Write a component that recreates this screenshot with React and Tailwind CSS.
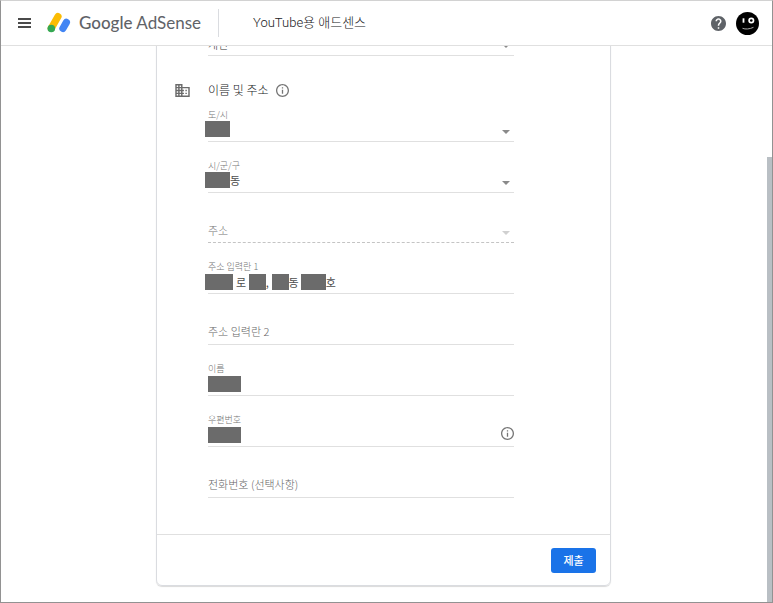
import React from "react";

const Line = "border-b border-[#e0e0e0]";

function Mask({ className }) {
  return <span aria-hidden="true" className={`absolute h-4 bg-[#6b6b6b] ${className}`} />;
}

function InfoIcon() {
  return (
    <svg viewBox="2 2 20 20" className="block size-[13px] shrink-0" fill="#757575" aria-hidden="true">
      <path d="M11 7h2v2h-2zm0 4h2v6h-2zm1-9C6.480 2 2 6.480 2 12s4.480 10 10 10 10-4.480 10-10S17.520 2 12 2zm0 18c-4.410 0-8-3.590-8-8s3.590-8 8-8 8 3.590 8 8-3.590 8-8 8z" />
    </svg>
  );
}

function Arrow({ className }) {
  return (
    <svg viewBox="0 0 8 4" className={`pointer-events-none absolute right-1 bottom-[7px] h-1 w-2 ${className}`} aria-hidden="true">
      <path d="M0 0h8L4 4z" fill="currentColor" />
    </svg>
  );
}

function SelectField({ id, label, value, pad = "", children }) {
  return (
    <div className={`flex h-[51px] flex-col justify-end ${Line}`}>
      <label htmlFor={id} className="text-[9px] leading-3 text-[#757575]">{label}</label>
      <div className="relative">
        <select id={id} defaultValue={value} className={`block h-5 w-full appearance-none bg-transparent pb-1 text-[11px] font-normal text-[#4d4d4d] outline-none ${pad}`}>
          <option>{value}</option>
        </select>
        {children}
        <Arrow className="text-[#8a8a8a]" />
      </div>
    </div>
  );
}

function InputField({ id, label, value = "", pad = "", children }) {
  return (
    <div className={`flex h-[51px] flex-col justify-end ${Line}`}>
      <label htmlFor={id} className="text-[9px] leading-3 text-[#757575]">{label}</label>
      <div className="relative">
        <input id={id} defaultValue={value} className={`block h-5 w-full bg-transparent pb-0.5 text-[11px] font-normal text-[#4d4d4d] outline-none ${pad}`} />
        {children}
      </div>
    </div>
  );
}

function EmptyField({ id, label }) {
  return (
    <div className={`flex h-[51px] items-end ${Line}`}>
      <input id={id} aria-label={label} placeholder={label} className="block h-6 w-full bg-transparent pb-0.5 text-[11px] outline-none placeholder:text-[#666666]" />
    </div>
  );
}

function Header() {
  return (
    <header className="flex h-[45px] shrink-0 items-center border-b border-[#e0e0e0] pr-[13px] pl-[17px]">
      <button type="button" aria-label="메뉴" className="flex h-[10px] w-[13px] flex-col justify-between">
        <span className="h-[2px] w-full bg-[#4a4a4a]" />
        <span className="h-[2px] w-full bg-[#4a4a4a]" />
        <span className="h-[2px] w-full bg-[#4a4a4a]" />
      </button>
      <a href="#" className="ml-4 flex items-center font-normal text-[#5f6368]">
        <svg viewBox="0 0 24 22" className="h-[22px] w-6" aria-hidden="true">
          <path d="M4.300 16.200 11 4.500" stroke="#fbbc04" strokeWidth="7.200" strokeLinecap="round" />
          <circle cx="4.300" cy="16.500" r="3.800" fill="#34a853" />
          <path d="M15.900 16.500 19.400 10.400" stroke="#4285f4" strokeWidth="7.200" strokeLinecap="round" />
        </svg>
        <span className="ml-2 font-[Lato] text-[17px] leading-6">
          <span className="font-medium">Google</span> AdSense
        </span>
      </a>
      <span className="ml-[17px] h-7 w-px bg-[#dadce0]" />
      <h1 className="ml-[34px] font-[Roboto,'Noto_Sans_CJK_KR',sans-serif] text-[13px] leading-5 font-light text-[#202124]">YouTube용 애드센스</h1>
      <button type="button" aria-label="도움말" className="ml-auto">
        <svg viewBox="2 2 20 20" className="size-[15px]" fill="#5f6368" aria-hidden="true">
          <path d="M12 2C6.480 2 2 6.480 2 12s4.480 10 10 10 10-4.480 10-10S17.520 2 12 2zm1 17h-2v-2h2v2zm2.070-7.750-.9.920C13.450 12.900 13 13.500 13 15h-2v-.5c0-1.100.45-2.100 1.170-2.830l1.240-1.260c.37-.36.59-.86.59-1.410 0-1.100-.9-2-2-2s-2 .9-2 2H8c0-2.210 1.790-4 4-4s4 1.790 4 4c0 .88-.36 1.680-.93 2.250z" />
        </svg>
      </button>
      <button type="button" aria-label="계정" className="ml-[10px]">
        <svg viewBox="0 0 23 23" className="size-[23px]" aria-hidden="true">
          <circle cx="11.500" cy="11.500" r="11.500" />
          <path d="M7.500 6.300v4.400" stroke="#fff" strokeWidth="1.800" />
          <circle cx="15.300" cy="8.500" r="2.200" fill="none" stroke="#fff" strokeWidth="1.700" />
          <path d="M6.500 16.300c3 1.200 7 .9 11-1" fill="none" stroke="#aaa" strokeWidth="1" />
        </svg>
      </button>
    </header>
  );
}

export default function App() {
  return (
    <div className="relative flex h-screen flex-col overflow-hidden border border-t-[#d2d2d2] border-r-[#929292] border-b-[#929292] border-l-[#929292] bg-white font-['Noto_Sans_CJK_KR',sans-serif] font-light">
      <Header />
      <main className="flex min-h-0 flex-1 flex-col items-center justify-end overflow-hidden pr-[6px] pb-4">
        <form className="w-full max-w-[455px] shrink-0 rounded-md border border-[#dadce0] shadow-[0_1px_1px_rgba(0,0,0,0.15)]">
          <div className="pr-24 pb-9 pl-[51px]">
            <div className={`relative ${Line}`}>
              <select aria-label="계정 유형" className="block h-5 w-full appearance-none bg-transparent pb-0.5 text-[11px] text-[#333333] outline-none">
                <option>개인</option>
              </select>
              <Arrow className="text-[#8a8a8a]" />
            </div>
            <div className="mt-6 -mb-[9px] -ml-[33px] flex h-5 items-center">
              <svg viewBox="2 3 20 18" className="h-[13px] w-[15px] shrink-0" fill="#6b6b6b" aria-hidden="true">
                <path d="M12 7V3H2v18h20V7H12zM6 19H4v-2h2v2zm0-4H4v-2h2v2zm0-4H4V9h2v2zm0-4H4V5h2v2zm4 12H8v-2h2v2zm0-4H8v-2h2v2zm0-4H8V9h2v2zm0-4H8V5h2v2zm10 12h-8v-2h2v-2h-2v-2h2v-2h-2V9h8v10zm-2-8h-2v2h2v-2zm0 4h-2v2h2v-2z" />
              </svg>
              <h2 className="mr-[7px] ml-[18px] text-[12px] leading-5 text-[#202124]">이름 및 주소</h2>
              <button type="button" aria-label="이름 및 주소 정보"><InfoIcon /></button>
            </div>
            <SelectField id="province" label="도/시" value="">
              <Mask className="bottom-1 -left-[3px] w-[25px]" />
            </SelectField>
            <SelectField id="city" label="시/군/구" value="동" pad="pl-[22px]">
              <Mask className="bottom-1 -left-[3px] w-[25px]" />
            </SelectField>
            <div className="relative flex h-[50px] items-end border-b border-dashed border-[#c4c4c4]">
              <select aria-label="주소" disabled className="block h-6 w-full appearance-none bg-transparent text-[11px] text-[#757575] opacity-100">
                <option>주소</option>
              </select>
              <Arrow className="text-[#d0d0d0]" />
            </div>
            <InputField id="addr1" label="주소 입력란 1" value="로        ,        동           호" pad="pl-7">
              <Mask className="bottom-[3px] -left-[3px] w-7" />
              <Mask className="bottom-[3px] left-[41px] w-[17px]" />
              <Mask className="bottom-[3px] left-16 w-[17px]" />
              <Mask className="bottom-[3px] left-[93px] w-[25px]" />
            </InputField>
            <EmptyField id="addr2" label="주소 입력란 2" />
            <InputField id="name" label="이름">
              <Mask className="bottom-[3px] left-0 w-[33px]" />
            </InputField>
            <InputField id="zip" label="우편번호">
              <Mask className="bottom-[3px] left-0 w-[33px]" />
              <button type="button" aria-label="우편번호 정보" className="absolute right-0 bottom-1.5"><InfoIcon /></button>
            </InputField>
            <EmptyField id="phone" label="전화번호 (선택사항)" />
          </div>
          <div className="flex justify-end border-t border-[#e0e0e0] px-[14px] pt-[13px] pb-3">
            <button type="submit" className="h-[25px] w-[45px] rounded-[3px] bg-[#1a73e8] text-[11px] font-medium text-white">제출</button>
          </div>
        </form>
      </main>
      <div aria-hidden="true" className="absolute right-0 bottom-0 h-[445px] w-[5px] bg-[#b9bfc4]" />
      <div aria-hidden="true" className="absolute bottom-0 left-1 h-px w-[390px] translate-y-px bg-[repeating-linear-gradient(90deg,#8f96ae_0_7px,#929292_7px_11px)]" />
    </div>
  );
}
